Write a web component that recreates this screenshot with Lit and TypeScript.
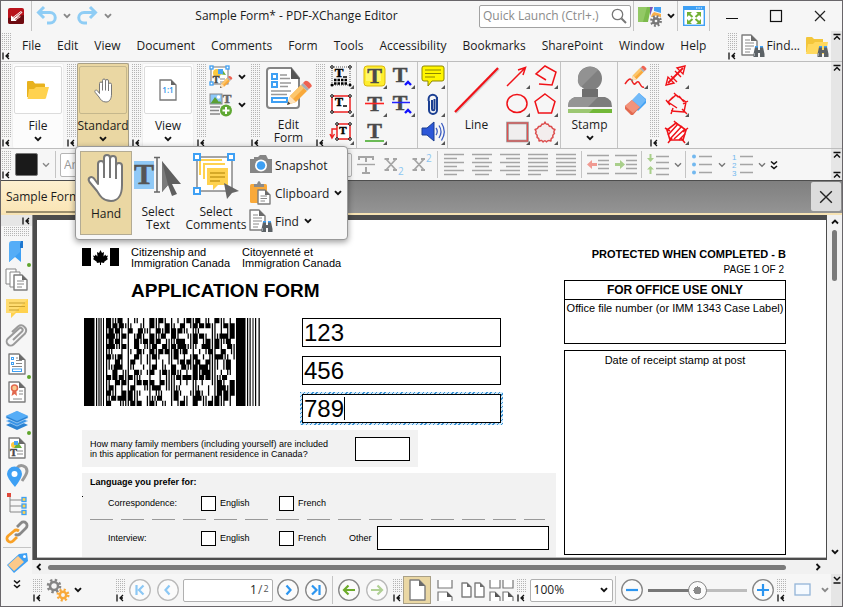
import { LitElement, html, svg, css, nothing } from "lit";
import type { TemplateResult, SVGTemplateResult } from "lit";
import { customElement, state } from "lit/decorators.js";
import { classMap } from "lit/directives/class-map.js";

/* ---------- icon helpers ---------- */
const ico = (w: number, h: number, body: SVGTemplateResult) =>
  html`<svg width=${w} height=${h} viewBox="0 0 ${w} ${h}" aria-hidden="true">${body}</svg>`;

const chevron = (color = "#111", strong = true) =>
  ico(8, 6, svg`<path d="M1 1.2 4 4.2 7 1.2" fill="none" stroke=${color} stroke-width=${strong ? 1.9 : 1.4} />`);

const foldMark = () =>
  ico(8, 8, svg`<path d="M1 0.5V7.5M7 1 4 4 7 7M4 4H7" fill="none" stroke="#111" stroke-width="1.3" />`);

const collapseUp = () =>
  ico(8, 8, svg`<path d="M0.500 1.500H7.500M1 6.500 4 3.500 7 6.500" fill="none" stroke="#111" stroke-width="1.500" />`);

const serifT = (x: number, y: number, size: number, color = "#4a4a4a") =>
  svg`<text x=${x} y=${y} font-family="Liberation Serif, serif" font-weight="700" font-size=${Math.round(size * 1.2)} text-anchor="middle" fill=${color} stroke=${color} stroke-width=".5">T</text>`;

const corner = svg`<path d="M24 20V24H20Z" fill="#555" />`;
const docShape = (x: number, y: number, w: number, h: number, f = 6) => svg`
  <path d="M${x} ${y}H${x + w - f}L${x + w} ${y + f}V${y + h}H${x}Z" fill="#fff" stroke="#7d7d7d" stroke-width="1.400" stroke-linejoin="round" />
  <path d="M${x + w - f} ${y}V${y + f}H${x + w}Z" fill="#6b6b6b" />`;
const pencil = (x: number, y: number, s: number) => svg`
  <g transform="translate(${x} ${y}) scale(${s})">
    <path d="M0 12 1.500 7.500 7 2 10 5 4.500 10.500Z" fill="#f9a93a" />
    <path d="M7 2 8.500 3.500 3 9 1.500 7.500Z" fill="#fcc66b" />
    <path d="M0 12 1.500 7.500 4.500 10.500Z" fill="#fde3bd" /><path d="M0 12 .6 10.300 1.700 11.400Z" fill="#444" />
    <path d="M7 2 8 1 11 4 10 5Z" fill="#a9b0b5" /><path d="M8 1 9 0Q10 -.5 11.500 1T12 3L11 4Z" fill="#ee6352" />
  </g>`;
const binoculars = (x: number, y: number) => svg`
  <g transform="translate(${x} ${y})">
    <path d="M2 1H5V4H7V1H10L11.500 8V11H7V7H5V11H.5V8Z" fill="#5c6266" />
    <path d="M2 0H5V1.500H2ZM7 0H10V1.500H7Z" fill="#3ea0f4" /><path d="M1.500 7V10" stroke="#9aa0a4" />
  </g>`;
const gear = (cx: number, cy: number, r: number, color: string) => svg`
  <circle cx=${cx} cy=${cy} r=${r} fill="none" stroke=${color} stroke-width="2.500" />
  <circle cx=${cx} cy=${cy} r=${r + 2} fill="none" stroke=${color} stroke-width="2.600" stroke-dasharray="${(r + 2) * 0.393} ${(r + 2) * 0.393}" />`;

const handPath = "M11 31V11a3 3 0 0 1 6 0V5a3 3 0 0 1 6 0V6a3 3 0 0 1 6 0V13a3 3 0 0 1 6 0V32C35 42 31 48 24 48C16 48 13 43 10 38L2.500 29C0 25 4 22.500 7 25.500Z M17 11V25M23 6V25M29 13V26";
const hand = (w: number, h: number) =>
  html`<svg width=${w} height=${h} viewBox="0 0 38 50" aria-hidden="true"><path d=${handPath} fill="#fff" stroke="#777" stroke-width="2" stroke-linejoin="round" /></svg>`;

const findDoc = () => ico(24, 24, svg`${docShape(1, 1, 15, 20, 6)}<path d="M4 6H9M4 9H13M4 12H13M4 15H10M4 18H9" stroke="#888" />${binoculars(12, 12)}`);

/* ---------- ribbon icons ---------- */
const I = {
  app: () => ico(16, 16, svg`<rect width="16" height="16" rx="2" fill="#b9121b" /><path d="M0 10 16 7V14a2 2 0 0 1-2 2H2a2 2 0 0 1-2-2Z" fill="#6d0a10" /><path d="M3 13V7.500L5 9 13 3 14.500 4.500 9 9 12 7.500 12.500 9 8 12 8.500 13Z" fill="#fff" /><path d="M5.500 10 13.500 4M7 11.500 12 8.300" stroke="#a11" stroke-width=".7" />`),
  undo: () => ico(22, 20, svg`<path d="M2.500 6.500H14a5 5 0 0 1 0 10.500H11" fill="none" stroke="#8fcdf5" stroke-width="3" /><path d="M8 1 2.500 6.500 8 12" fill="none" stroke="#8fcdf5" stroke-width="3" />`),
  redo: () => ico(22, 20, svg`<path d="M18.500 6.500H7a5 5 0 0 0 0 10.500H10" fill="none" stroke="#8fcdf5" stroke-width="3" /><path d="M13 1 18.500 6.500 13 12" fill="none" stroke="#8fcdf5" stroke-width="3" />`),
  search: () => ico(16, 16, svg`<circle cx="6.500" cy="6.500" r="5.200" fill="none" stroke="#777" stroke-width="1.300" /><path d="M10.500 10.500 15 15" stroke="#777" stroke-width="2" />`),
  theme: () => ico(24, 22, svg`<path d="M0 2H13L10 17H0Z" fill="#7cba4c" /><path d="M0 2H9L5 17H0Z" fill="#93c965" /><path d="M12 2H15L12 11Z" fill="#7a52b5" /><path d="M16 2H23V8L16 6Z" fill="#45a2f3" /><path d="M14 9 16 7 23 9V12H13Z" fill="#f9b04a" /><circle cx="18" cy="16" r="5.500" fill="#f6f6f6" />${gear(18, 16, 2.6, "#777")}`),
  full: () => ico(22, 20, svg`<rect x=".7" y=".7" width="20.600" height="18.600" fill="#fff" stroke="#3ea0f4" stroke-width="1.400" /><path d="M0 0H22V4H0Z" fill="#3ea0f4" /><path d="M13 2H19" stroke="#fff" stroke-dasharray="1.400 1" /><path d="M4 6H9L4 11ZM18 6V11L13 6ZM4 18V13L9 18ZM18 18H13L18 13Z" fill="#72b033" /><path d="M5 7 9.500 11M17 7 12.500 11M5 17 9.500 13M17 17 12.500 13" stroke="#72b033" stroke-width="2" />`),
  min: () => ico(12, 12, svg`<path d="M0 8.500H12" stroke="#111" />`),
  max: () => ico(12, 12, svg`<rect x=".5" y=".5" width="11" height="11" fill="none" stroke="#111" stroke-width="1.200" />`),
  close: (s = 12) => html`<svg width=${s} height=${s} viewBox="0 0 12 12" aria-hidden="true"><path d="M1 1 11 11M11 1 1 11" stroke="#222" stroke-width="1.200" /></svg>`,
  folder: () => ico(24, 20, svg`<path d="M1 2Q1 1 2 1H7L9 3.500H18Q19 3.500 19 4.500V17H1Z" fill="#e8b21e" /><path d="M3 9H8L10 7H23L20 18Q19.800 19 18.500 19H1.500Z" fill="#ffd24f" />`),
  folderFind: () => ico(24, 24, svg`<path d="M1 4Q1 3 2 3H7L9 5H18V18H1Z" fill="#f3c63b" /><path d="M3 10H8L10 8H23L21 20H1Z" fill="#ffd95e" />${binoculars(12, 12)}`),
  one: () => ico(18, 22, svg`<path d="M1 1H12L17 6V21H1Z" fill="#fff" stroke="#777" stroke-width="1.300" /><path d="M12 1V6H17Z" fill="#666" /><text x="9" y="14" text-anchor="middle" font-size="8" font-family="Open Sans, sans-serif" font-weight="600" fill="#2c8fe8">1:1</text>`),
  editContent: () => ico(24, 24, svg`<rect x="2" y="2" width="17" height="17" fill="#fff" stroke="#777" /><circle cx="8" cy="8" r="4" fill="#fcc93e" /><path d="M9 9 13 4 17 10Z" fill="#68ae3c" /><rect x="9" y="4" width="5" height="5" fill="#49a5f5" />${serifT(7, 18, 8)}<path d="M11 14H16M11 17H15" stroke="#888" />
    <g fill="#fff" stroke="#3ea0f4" stroke-width="1.300"><rect x="1" y="1" width="3" height="3" /><rect x="17" y="1" width="3" height="3" /><rect x="1" y="17" width="3" height="3" /></g>${pencil(11, 11, 1)}`),
  addImage: () => ico(24, 24, svg`<rect x="1" y="1" width="12" height="10" fill="#8cc8fa" stroke="#888" /><circle cx="9.500" cy="4" r="1.800" fill="#fff" /><path d="M1.500 10.500 6 4 10 9 11 8 12.500 10.500Z" fill="#5b9f33" />${serifT(18, 10, 11, "#666")}<path d="M1 14H11M1 17.500H10M1 21H11" stroke="#888" stroke-width="1.300" /><circle cx="17" cy="17.500" r="6" fill="#5fa833" /><path d="M13.500 17.500H20.500M17 14V21" stroke="#fff" stroke-width="2" />`),
  editForm: () => ico(48, 48, svg`<path d="M5 2H26L34 12V39Q34 42 31 42H5Q2 42 2 39V5Q2 2 5 2Z" fill="#fff" stroke="#858585" stroke-width="2" /><path d="M26 1.500V13H35Z" fill="#555" />
    <g fill="#fff" stroke="#3ea0f4" stroke-width="2"><rect x="7" y="8" width="5" height="5" /><rect x="7" y="16" width="5" height="5" /><rect x="7" y="32" width="15" height="4" /></g><path d="M15 9H22M15 12.500H25M15 17H26M15 20.500H23M6 25H26M6 28.500H22" stroke="#999" stroke-width="1.500" />${pencil(22, 15, 2)}`),
  typewriter: () => ico(24, 24, svg`<rect x="2" y="2" width="18" height="18" fill="none" stroke="#555" stroke-dasharray="1 1" />${serifT(9, 12, 11, "#000")}<path d="M13 12H17" stroke="#000" stroke-width="1.500" /><g fill="#fff" stroke="#000"><circle cx="2" cy="2" r="1.300" /><circle cx="20" cy="2" r="1.300" /></g><g fill="none" stroke="#000"><path d="M4 15H18M4 18.500H18" stroke-dasharray="2.500 1" stroke-width="2.400" /></g><g fill="#000"><circle cx="2" cy="20" r="1.500" /><circle cx="20" cy="20" r="1.500" /></g>${corner}`),
  textBox: () => ico(24, 24, svg`<rect x="2" y="3" width="18" height="16" fill="#fff" stroke="#e22" stroke-width="1.500" />${serifT(9, 13, 10, "#000")}<path d="M13 13H17" stroke="#000" stroke-width="1.500" /><g fill="#fff" stroke="#000"><circle cx="2" cy="3" r="1.300" /><circle cx="20" cy="3" r="1.300" /><circle cx="2" cy="19" r="1.300" /><circle cx="20" cy="19" r="1.300" /></g>${corner}`),
  callout: () => ico(24, 24, svg`<rect x="7" y="3" width="13" height="15" fill="#fff" stroke="#e22" stroke-width="1.500" /><path d="M7 8H2V17M0 13 2 17 4.500 13" fill="none" stroke="#e22" stroke-width="1.400" />${serifT(13, 13, 9, "#000")}<g fill="#fff" stroke="#000"><circle cx="7" cy="3" r="1.300" /><circle cx="20" cy="3" r="1.300" /><circle cx="7" cy="18" r="1.300" /><circle cx="20" cy="18" r="1.300" /></g>${corner}`),
  highlight: () => ico(24, 24, svg`<rect x="1" y="1" width="21" height="20" rx="3" fill="#ffee2e" stroke="#d9b70d" /><rect x="3" y="3" width="15" height="13" fill="#fff76a" />${serifT(11.5, 18, 18)}${corner}`),
  strike: () => ico(24, 24, svg`${serifT(11.5, 18, 18)}<path d="M2 10.500H21" stroke="#f22" stroke-width="1.600" />${corner}`),
  under: () => ico(24, 24, svg`${serifT(11.5, 17, 18)}<path d="M2 20H21" stroke="#5cb544" stroke-width="1.800" />${corner}`),
  insert: () => ico(24, 24, svg`${serifT(9, 17, 18)}<path d="M14 20 17 17 20 20" fill="none" stroke="#11f" stroke-width="2.400" />${corner}`),
  replace: () => ico(24, 24, svg`${serifT(9, 17, 18)}<path d="M1 9.500H19" stroke="#22f" stroke-width="1.500" /><path d="M14 20 17 17 20 20" fill="none" stroke="#11f" stroke-width="2.400" />${corner}`),
  note: () => ico(24, 24, svg`<path d="M3 1H21Q23 1 23 3V14Q23 16 21 16H11L7 21V16H3Q1 16 1 14V3Q1 1 3 1Z" fill="#fff500" stroke="#8d8600" /><path d="M4 5H20M4 8.500H20M4 12H14" stroke="#8d8600" stroke-width="1.200" />${corner}`),
  attach: () => ico(24, 24, svg`<path d="M8 8V17a4 4 0 0 0 8 0V6a4.200 4.200 0 0 0-8.400 0V8M16 9V4M11 7V16a1 1 0 0 0 2.500 0V6" fill="none" stroke="#1b3f92" stroke-width="2" />${corner}`),
  sound: () => ico(24, 24, svg`<path d="M1 7H6L13 1V20L6 14H1Z" fill="#2c57d8" stroke="#1b3f92" /><path d="M15 7Q17.500 10.500 15 14M18 4.500Q22 10.500 18 17M20.500 2Q26 10.500 20.500 19.500" fill="none" stroke="#3a5bc0" stroke-width="1.300" />${corner}`),
  line: () => ico(48, 48, svg`<path d="M2 46 45 2" stroke="#9b9b9b" stroke-opacity=".4" stroke-width="2" transform="translate(1 1)" /><path d="M2 46 45 2" stroke="#f01218" stroke-width="2.200" />`),
  arrow: () => ico(24, 24, svg`<path d="M1 21 19 3M12 5 19.500 2.500 17 10" fill="none" stroke="#f01218" stroke-width="1.500" />${corner}`),
  ellipse: () => ico(24, 24, svg`<ellipse cx="11" cy="10.500" rx="10" ry="9" fill="none" stroke="#f01218" stroke-width="1.500" />${corner}`),
  rect: () => ico(24, 24, svg`<rect x="1.500" y="2" width="20" height="18" fill="#f0eeee" stroke="#9a9a9a" stroke-width="2.600" /><rect x="1.500" y="2" width="20" height="18" fill="none" stroke="#e05050" stroke-width="1.200" />${corner}`),
  polyline: () => ico(24, 24, svg`<path d="M12 15 2 9 11 1 22 7 18 20 5 19" fill="none" stroke="#f01218" stroke-width="1.500" />${corner}`),
  polygon: () => ico(24, 24, svg`<path d="M11 1 21 8.500 17.500 20H4.500L1 8.500Z" fill="none" stroke="#f01218" stroke-width="1.500" />${corner}`),
  cloud: () => ico(24, 24, svg`<path d="M11 1Q12 4 14 3Q15 6 17.500 5.500Q18 8 21 8.500Q19 11 20.500 12.500Q18 14 19 16.500Q16.500 17 17 20Q14 18.500 12.500 21Q11 18.500 9 21Q8 18.500 5 20Q5.500 17 3 16.500Q4 14 1.500 12.500Q3 10.500 1 8.500Q4 8 4.500 5.500Q7 6 8 3Q10 4 11 1Z" fill="#f3eded" stroke="#dc4d4d" stroke-width="1.400" stroke-linejoin="round" />${corner}`),
  stamp: () => ico(46, 48, svg`<circle cx="23" cy="12.500" r="12" fill="#808080" /><path d="M14 21Q10 18 11 12.500A12 12 0 0 1 31 4Z" fill="#929292" /><path d="M15 23H31V31H15Z" fill="#6e6e6e" /><path d="M8 31H38Q45 33 45 41H1Q1 33 8 31Z" fill="#7d7d7d" /><path d="M8 31H31L21 41H1Q1 33 8 31Z" fill="#949494" /><path d="M1 43H45V47H1Z" fill="#72b838" /><path d="M1 43H26L22 47H1Z" fill="#9cc772" />`),
  scribble: () => ico(24, 24, svg`<path d="M1 19Q6 11 8 16T12 18T16 19T20 22" fill="none" stroke="#e22" stroke-width="1.500" />${pencil(7, 1, 1.25)}${corner}`),
  eraser: () => ico(24, 24, svg`<path d="M15 0 22 6V10L14 18 6 10Z" fill="#45a2f3" /><path d="M1 13 8 7 16 14 9 22H7L1 16Z" fill="#e2694f" /><path d="M1 13 8 7 16 14 9 20Z" fill="#f2937b" /><path d="M8 7 15 0 22 7 16 14Z" fill="#72baf8" />`),
  distance: () => ico(24, 24, svg`<path d="M3 18 18 3" stroke="#f01218" stroke-width="1.800" /><path d="M1 20 3 12 9 18ZM20 1 12 3 18 9ZM6 11 12 17M10 6 16 12" fill="none" stroke="#f01218" stroke-width="1.400" />${corner}`),
  perimeter: () => ico(24, 24, svg`<path d="M12 15 3 9 11 2 21 9 19 19 6 18M1 7 5 12M9 0 13 4M18 11 23 8M17 16 22 21M8 15 6 21M4 8 8 4M14 3 19 9" fill="none" stroke="#f01218" stroke-width="1.400" />${corner}`),
  area: () => ico(24, 24, svg`<path d="M11 2 21 9 18 19H5L2 9Z" fill="#fff" stroke="#f01218" stroke-width="1.600" /><path d="M3 14 13 3M5 18 17 5M9 18 20 8M14 19 20 13M0 7 5 10M9 0 13 4M18 11 23 7M16 17 20 22M7 17 3 22" stroke="#f01218" stroke-width="1.500" />${corner}`),
};

/* ---------- popup icons ---------- */
const P = {
  selectText: () => ico(48, 48, svg`<rect x="0" y="8" width="20" height="28" fill="#90c9f6" />${serifT(10, 31, 25, "#555")}<path d="M20 4.500H26M23 4.500V39M20 39H26" stroke="#666" stroke-width="1.500" fill="none" /><path d="M28 8V39L34 32 38 43 43 41 38 31H47Z" fill="#5f5f5f" /><path d="M28 8V39L34 32Z" fill="#7b7b7b" />`),
  selectComments: () => ico(48, 48, svg`<rect x="5" y="4" width="35" height="34" fill="#fff" stroke="#888" stroke-width="1.500" /><path d="M7 6H30V8H9V22H7ZM11 10H33V12H13V26H11Z" fill="#ffd24f" /><path d="M15 15H36V32H26L21 37V32H15Z" fill="#ffd24f" /><path d="M18 20H33M18 24H33M18 28H28" stroke="#c99c1c" stroke-width="1.400" />
    <g fill="#fff" stroke="#3ea0f4" stroke-width="2"><rect x="2" y="1" width="6" height="6" /><rect x="36" y="1" width="6" height="6" /><rect x="2" y="35" width="6" height="6" /></g><path d="M32 30 47 38 40 40 35 46Z" fill="#666" />`),
  snapshot: () => ico(24, 20, svg`<path d="M1 4H5V2H9L11 0H17L19 4H23V18H1Z" fill="#868686" /><circle cx="12" cy="10.500" r="6" fill="#fff" /><circle cx="12" cy="10.500" r="4.300" fill="#3ea0f4" />`),
  clipboard: () => ico(24, 24, svg`<rect x="1" y="3" width="17" height="19" rx="1.500" fill="#f9a93a" /><path d="M5 6V3H8Q9 0 10 0T12 3H15V6Z" fill="#8b8b8b" />${docShape(9, 9, 12, 14, 5)}<path d="M11.500 15H18M11.500 17.500H18M11.500 20H16" stroke="#888" />`),
};

/* ---------- formatting bar icons ---------- */
const lines = (rows: number[][]) =>
  ico(22, 24, svg`${rows.map(([a, b], i) => svg`<path d="M${a} ${1.5 + i * 4}H${b}" stroke="#a5a5a5" stroke-width="1.500" />`)}`);
const F = {
  strike: () => ico(22, 24, svg`<path d="M4 7V4H18V7M11 4V9M11 14V20M7 20H15" fill="none" stroke="#a5a5a5" stroke-width="2" /><path d="M2 11.500H20" stroke="#a5a5a5" stroke-width="1.400" />`),
  sub: () => ico(22, 24, svg`<path d="M3 6 13 17M13 6 3 17M1.500 6H6M10 6H14M1.500 17H6M10 17H14" stroke="#a5a5a5" stroke-width="1.800" /><text x="15" y="22" font-family="Open Sans, sans-serif" font-size="10" fill="#8cc6f2">2</text>`),
  sup: () => ico(22, 24, svg`<path d="M3 6 13 17M13 6 3 17M1.500 6H6M10 6H14M1.500 17H6M10 17H14" stroke="#a5a5a5" stroke-width="1.800" /><text x="15" y="9" font-family="Open Sans, sans-serif" font-size="10" fill="#8cc6f2">2</text>`),
  left: () => lines([[1, 21], [1, 14], [1, 21], [1, 14], [1, 21], [1, 14]]),
  center: () => lines([[1, 21], [4, 18], [1, 21], [4, 18], [1, 21], [4, 18]]),
  right: () => lines([[1, 21], [7, 21], [1, 21], [7, 21], [1, 21], [7, 21]]),
  justify: () => lines([[1, 21], [1, 21], [1, 21], [1, 21], [1, 21], [1, 14]]),
  full: () => lines([[1, 21], [1, 21], [1, 21], [1, 21], [1, 21], [1, 21]]),
  outdent: () => ico(24, 24, svg`<path d="M1 2.500H23M12 7.500H23M12 11.500H23M12 15.500H23M1 20.500H23" stroke="#a5a5a5" stroke-width="1.500" /><path d="M1 11.500 6 7V10H11V13H6V16Z" fill="#f09a92" />`),
  indent: () => ico(24, 24, svg`<path d="M1 2.500H23M12 7.500H23M12 11.500H23M12 15.500H23M1 20.500H23" stroke="#a5a5a5" stroke-width="1.500" /><path d="M11 11.500 6 7V10H1V13H6V16Z" fill="#a9cf8b" />`),
  spacing: () => ico(22, 24, svg`<path d="M9 3.500H22M9 9.500H22M9 15.500H22M9 21.500H22" stroke="#a5a5a5" stroke-width="1.400" /><path d="M3.500 1V7M3.500 21V14" stroke="#a9cf8b" stroke-width="2" /><path d="M0 5H7L3.500 9ZM0 16.500H7L3.500 13Z" fill="#a9cf8b" />`),
  bullets: () => ico(22, 24, svg`<path d="M8 3.500H21M8 11.500H21M8 19.500H21" stroke="#a5a5a5" stroke-width="1.400" /><g fill="#72b8ef"><circle cx="3" cy="3.500" r="2" /><circle cx="3" cy="11.500" r="2" /><circle cx="3" cy="19.500" r="2" /></g>`),
  numbers: () => ico(22, 24, svg`<path d="M9 3.500H22M9 11.500H22M9 19.500H22" stroke="#a5a5a5" stroke-width="1.400" /><g fill="#72b8ef" font-family="Liberation Sans, sans-serif" font-size="8"><text x="1" y="7">1</text><text x="1" y="15">2</text><text x="1" y="23">3</text></g>`),
  more: () => ico(8, 10, svg`<path d="M1 1.500 4 4 7 1.500M1 6 4 8.500 7 6" fill="none" stroke="#111" stroke-width="1.600" />`),
};

/* ---------- side pane icons ---------- */
const S: { name: string; dot?: boolean; body: SVGTemplateResult }[] = [
  { name: "Bookmarks", dot: true, body: svg`<path d="M4 4H16V22L10 17 4 22Z" fill="#3ea0f4" /><path d="M15 1H18V8H15Z" fill="#1f78d0" /><path d="M4 4Q4 1 7 1H16L15 4V12L4 22Z" fill="#55adf7" />` },
  { name: "Thumbnails", body: svg`<path d="M5 16H1V1H11V4M9 19H5V4H15V7" fill="#fff" stroke="#858585" />${docShape(9, 7, 13, 15, 5)}<path d="M12 13H19M12 16H19M12 19H17" stroke="#888" />` },
  { name: "Comments", body: svg`<path d="M1 3H23V17H11L6 22V17H1Z" fill="#ffd24f" /><path d="M1 3H23L9 17H1Z" fill="#ffdc70" /><path d="M4 7H20M4 10.500H20M4 14H14" stroke="#c9a233" />` },
  { name: "Attachments", body: svg`<path d="M8 16 17 7.500a2 2 0 0 0-3-3L3 14.500a4 4 0 0 0 5.500 6L20 9.500a5 5 0 0 0-7-7L7 8" fill="none" stroke="#9a9a9a" stroke-width="2" />` },
  { name: "Fields", dot: true, body: svg`${docShape(4, 2, 16, 20, 6)}<g fill="none" stroke="#3ea0f4"><rect x="6.500" y="5.500" width="2" height="2" /><rect x="6.500" y="10.500" width="2" height="2" /><rect x="7.500" y="17" width="9" height="2.500" /></g><path d="M11 6H13M11 8.500H17M11 11.500H17M7 14.500H17" stroke="#888" />` },
  { name: "Signatures", body: svg`${docShape(4, 2, 16, 20, 6)}<path d="M8 9 6.500 16 9.500 14 12 16 11 9Z" fill="#e2694f" /><circle cx="9.500" cy="8" r="3" fill="#f9c98f" stroke="#e2694f" stroke-width="1.500" /><path d="M14 11H18M14 14H18M8 19H17" stroke="#888" />` },
  { name: "Layers", dot: true, body: svg`<path d="M1 17 12 12 23 17 12 22Z" fill="#2c83d3" /><path d="M1 13 12 8 23 13 12 18Z" fill="#3a94e6" stroke="#c9e4fb" stroke-width=".6" /><path d="M1 8 12 3 23 8V10L12 15 1 10Z" fill="#2c83d3" stroke="#c9e4fb" stroke-width=".6" /><path d="M1 8 12 3 23 8 12 13Z" fill="#55adf7" />` },
  { name: "Content", body: svg`${docShape(4, 2, 16, 20, 6)}<circle cx="9" cy="9" r="3" fill="#fcc93e" /><path d="M9 12 13 6 17 12Z" fill="#68ae3c" /><rect x="9" y="5" width="4" height="4" fill="#49a5f5" />${serifT(8.5, 20, 8)}<path d="M12 15H18M12 18H18" stroke="#888" />` },
  { name: "Destinations", body: svg`<path d="M17 17Q22 10 22 7a5.500 5.500 0 0 0-10-3" fill="none" stroke="#999" stroke-width="3" /><path d="M10 23Q2 14 2 10a7.500 7.500 0 0 1 15 0Q17 14 10 23Z" fill="#3ea0f4" /><circle cx="9.500" cy="10" r="3" fill="#fff" />` },
  { name: "Structure", body: svg`<path d="M5 4V20H18M5 8H18M5 14H18" fill="none" stroke="#888" /><rect x="2" y="1" width="4" height="4" fill="#e0483a" /><g fill="#ffd24f" stroke="#3ea0f4" stroke-width="1.300"><rect x="17" y="5.500" width="4" height="4" /><rect x="17" y="12" width="4" height="4" /><rect x="17" y="18.500" width="4" height="4" /></g>` },
  { name: "Links", body: svg`<path d="M12 7 16 3a3.500 3.500 0 0 1 5 5L15 14Q12 16 10 14" fill="none" stroke="#888" stroke-width="2.800" /><path d="M14 11Q11 9 9 11L3 16a3.500 3.500 0 0 0 5 5L12 17" fill="none" stroke="#f9a126" stroke-width="2.800" />` },
];
const tagIcon = () => ico(24, 24, svg`<path d="M14 3 22 2 23 10 9 22 2 14Z" fill="#3ea0f4" /><path d="M3 14 13 5 19 11 9 20Z" fill="#fcc98a" /><circle cx="19.500" cy="5.500" r="1.500" fill="#fff" />`);

/* ---------- stacked 2-D barcode of the form ---------- */
const barcode = () => {
  const parts: string[] = [];
  const bar = (x: number, w: number, y = 0, h = 88) => parts.push(`M${x} ${y}h${w}v${h}h${-w}Z`);
  [[0, 10.5], [12, 1.2], [14.4, 1.2], [16.5, 1.2], [19, 1]].forEach(([x, w]) => bar(x, w));
  [[152, 9.5], [163, 1.2], [165.5, 1.2], [168.5, 1], [171, 1.2], [174.5, 1.3]].forEach(([x, w]) => bar(x, w));
  let seed = 7153;
  const rnd = () => (seed = (seed * 16807) % 2147483647) / 2147483647;
  const rows = 17, unit = 130 / (6 * 17), rh = 88 / rows;
  for (let r = 0; r < rows; r++)
    for (let c = 0; c < 6; c++) {
      const seg = [1, 1, 1, 1, 1, 1, 1, 1];
      for (let k = 0; k < 3; k++) seg[Math.floor(rnd() * 8)] += 3;
      let x = 22 + c * 17 * unit;
      seg.forEach((n, i) => {
        if (i % 2 === 0) bar(+x.toFixed(2), +(n * unit).toFixed(2), +(r * rh).toFixed(2), +rh.toFixed(2));
        x += n * unit;
      });
    }
  return ico(176, 88, svg`<path d=${parts.join("")} fill="#000" />`);
};

const pageIcons = {
  single: () => ico(24, 24, svg`${docShape(5, 2, 15, 20, 6)}`),
  continuous: () => ico(24, 24, svg`<path d="M5 2V10H19V2M5 23V14H14L19 19V23" fill="#fff" stroke="#777" stroke-width="1.200" /><path d="M14 14V19H19Z" fill="#555" />`),
  two: () => ico(26, 24, svg`${docShape(2, 5, 9, 14, 4)}${docShape(15, 5, 9, 14, 4)}`),
  twoCont: () => ico(26, 24, svg`<path d="M2 2V10H12V2M15 2V10H25V2M2 23V14H7L12 19V23M15 23V14H20L25 19V23" fill="#fff" stroke="#777" stroke-width="1.200" /><path d="M7 14V19H12ZM20 14V19H25Z" fill="#555" />`),
};
const nav = (d: string, color: string) =>
  ico(22, 22, svg`<circle cx="11" cy="11" r="10.300" fill="#fbfbfb" stroke=${color.startsWith("#2") || color.startsWith("#6") ? "#868686" : "#b9b9b9"} stroke-width="1.300" /><path d=${d} fill="none" stroke=${color} stroke-width="2.200" />`);

@customElement("app-root")
export class AppRoot extends LitElement {
  @state() private fields = ["123", "456", "789"];

  static styles = css`
    :host { display: block; height: 100vh; min-height: 560px; overflow: hidden; font: 12px/16px "Open Sans", "Noto Sans", sans-serif; color: #1b1b1b; }
    * { box-sizing: border-box; }
    svg { display: block; flex: none; overflow: visible; }
    button { font: inherit; color: inherit; background: none; border: 0; padding: 0; margin: 0; display: flex; align-items: center; justify-content: center; flex: none; }
    input, select { font: inherit; color: inherit; margin: 0; border-radius: 0; outline: 0; min-width: 0; }
    .window { height: 100%; border: 1px solid #69666a; display: flex; flex-direction: column; background: #f6f6f6; }
    .row { display: flex; align-items: center; }
    .vline { width: 1px; align-self: stretch; background: #c4c4c4; flex: none; }

    .title { height: 30px; flex: none; }
    .app { width: 30px; }
    .undo { width: 28px; margin-left: 1px; }
    .chev { width: 12px; align-self: stretch; }
    .caption { flex: 1; text-align: center; white-space: nowrap; }
    .search { display: flex; align-items: center; width: 152px; height: 23px; border: 1px solid #a2a2a2; border-radius: 2px; background: #fff; padding: 0 3px; margin-right: 2px; }
    .search input { border: 0; background: none; padding: 0; flex: 1; }
    .search input::placeholder { color: #8b8b8b; opacity: 1; }
    .tool { width: 28px; height: 28px; }
    .title .tool { width: 31px; }
    .wbtn { width: 44px; height: 30px; }

    .grip { width: 10px; align-self: stretch; display: flex; flex-direction: column; flex: none; padding: 2px 0 1px; gap: 1px; align-items: flex-start; }
    .dots { flex: 1; width: 9px; background: conic-gradient(from 0deg at 1px 1px, transparent 75%, #b4b4b4 0) 0 0 / 2px 2px; }
    .rail { width: 11px; align-self: stretch; background: #e6e6e6; display: flex; flex-direction: column; align-items: center; justify-content: space-between; padding: 2px 0 1px; flex: none; }
    .spring { flex: 1; }

    .menu { height: 30px; flex: none; padding-left: 1px; }
    .menu nav { display: flex; flex: 1; gap: 16px; padding-left: 10px; }
    .menu a { color: inherit; text-decoration: none; white-space: nowrap; }
    .find { gap: 2px; margin-left: 3px; }

    .ribbon { height: 88px; flex: none; padding-left: 1px; border-top: 1px solid #bdbdbd; border-bottom: 1px solid #bdbdbd; align-items: stretch; position: relative; z-index: 2; }
    .anchor { position: relative; display: flex; }
    .card { width: 52px; margin: 1px 3px 0 0; flex-direction: column; justify-content: flex-start; padding: 2px 0; border: 1px solid #f0f0f0; border-bottom: 0; background: #fcfcfc; line-height: 16px; border-radius: 2px; }
    .card .pic { width: 48px; height: 48px; border: 1px solid #dcdcdc; border-radius: 2px; background: #fff; display: grid; place-items: center; margin-bottom: 4px; flex: none; }
    .card .cap { margin-bottom: 2px; white-space: nowrap; }
    .card.on { background: #ead7a3; border-color: #a9a087; }
    .card.on .pic { background: #ead7a3; border-color: #c5b78c; }
    .col { display: flex; flex-direction: column; padding-top: 1px; }
    .col button { width: 28px; height: 28px; }
    .col.slim button { width: 14px; }
    .pad { padding-left: 3px; }
    .big { width: 55px; flex-direction: column; justify-content: flex-start; padding-top: 4px; line-height: 13px; gap: 4px; }
    .ribbon .vline { margin: 0 1px 0 0; }

    .popup { position: absolute; left: -2px; top: 84px; z-index: 5; width: 273px; height: 94px; display: flex; padding: 4px; background: #f7f7f7; border: 1px solid #999; border-radius: 4px; box-shadow: 0 2px 6px #0006; line-height: 13px; }
    .pb { width: 52px; flex-direction: column; justify-content: flex-start; border: 1px solid transparent; padding-top: 1px; gap: 4px; }
    .pb.on { background: #ead7a3; border-color: #b3ab94; }
    .pb.wide { width: 64px; }
    .plist { display: flex; flex-direction: column; }
    .plist button { height: 28px; justify-content: flex-start; gap: 2px; padding-left: 1px; white-space: nowrap; }
    .plist svg + span + svg { margin-left: 3px; }

    .format { height: 31px; flex: none; padding-left: 1px; }
    .swatch { width: 23px; height: 23px; background: #1a1a1a; border: 1px solid #777; border-radius: 2px; margin-left: 3px; }
    .format .chev { width: 16px; }
    .format .list { width: 12px; }
    .format .tool { height: 28px; }
    .format .vline { margin: 2px 2px 2px 1px; }
    .fontbox { width: 292px; height: 24px; border: 1px solid #b5b5b5; border-radius: 2px; background: #fff; color: #999; margin: 0 0 0 2px; padding: 0 0 0 3px; appearance: none; }

    .tabs { height: 35px; flex: none; display: flex; align-items: stretch; justify-content: space-between; border-top: 1px solid #4d4d4d; border-bottom: 2px solid #f7e3b3; background: linear-gradient(#7f7f7f, #949494); }
    .tab { width: 106px; background: linear-gradient(#fdf0cf, #fae5b5); padding: 8px 5px 1px; justify-content: flex-start; }
    .tab span { border-bottom: 2px solid #9b8e6d; height: 24px; width: 100%; text-align: left; white-space: nowrap; }
    .tabclose { width: 30px; height: 29px; background: #dcdcdc; border-radius: 2px; margin: 1px 1px 0 0; }

    .main { flex: 1; min-height: 0; display: flex; }
    .side { width: 31px; flex: none; display: flex; flex-direction: column; align-items: center; }
    .sidetop { align-self: stretch; background: #e6e6e6; height: 11px; display: flex; justify-content: flex-end; align-items: center; padding-right: 2px; flex: none; }
    .sidegrip { width: 26px; height: 10px; flex: none; margin: 1px 0; background: conic-gradient(from 0deg at 1px 1px, transparent 75%, #b4b4b4 0) 0 0 / 2px 2px; }
    .side button { width: 30px; height: 28px; position: relative; }
    .side button.last { height: 14px; }
    .dot { position: absolute; right: 1px; bottom: -1px; width: 4px; height: 4px; border-radius: 2px; background: #5fa52c; }
    .hline { height: 1px; width: 28px; background: #c4c4c4; margin: 1px 0; flex: none; }
    .center { flex: 1; min-width: 0; display: flex; flex-direction: column; }
    .view { flex: 1; min-height: 0; display: flex; }
    .canvas { flex: 1; min-width: 0; background: #4c4c4c; padding: 5px 1px 2px 4px; border-left: 1px solid #888; overflow: hidden; }
    .vs { width: 15px; background: #f1f1f1; display: flex; flex-direction: column; align-items: center; padding: 4px 0 5px; gap: 5px; flex: none; }
    .vs .thumb { width: 5px; height: 51px; border-radius: 3px; background: #7a7a7a; }
    .hs { height: 14px; background: #f1f1f1; display: flex; align-items: center; gap: 5px; padding: 0 20px 0 3px; flex: none; }
    .hs .track { flex: 1; }
    .hs .thumb { width: 97%; height: 5px; border-radius: 3px; background: #7a7a7a; }

    .page { height: 100%; background: #fff; overflow: hidden; display: grid; grid-template-columns: 1fr 222px; grid-template-rows: minmax(0, 1fr); gap: 8px; padding: 0 40px 0 45px; color: #000; font: 11px/11px "Liberation Sans", Arial, sans-serif; border-bottom: 1px solid #bbb; }
    .brand { display: flex; gap: 12px; padding-top: 27px; white-space: nowrap; }
    .brand svg { margin-top: 1px; }
    h1 { font-size: 19px; line-height: 22px; margin: 11px 0 16px 49px; white-space: nowrap; }
    .codes { display: flex; gap: 42px; padding-left: 2px; height: 112px; }
    .stack { display: flex; flex-direction: column; gap: 9px; }
    .stack input { width: 199px; height: 29px; border: 1px solid #000; font-size: 24px; padding: 0 1px; background: #fff; flex: none; }
    .focus { position: relative; margin: -2px; padding: 2px; width: 203px; height: 33px; background: repeating-linear-gradient(135deg, #3b93d5 0 1px, #d5ecfc 1px 3px); display: flex; }
    .caret { position: absolute; left: 44px; top: 5px; width: 1px; height: 23px; background: #000; }
    .gray { background: #f2f2f2; font-size: 9px; line-height: 10px; }
    .family { width: 336px; height: 37px; padding: 0 8px; display: flex; align-items: center; justify-content: space-between; }
    .gray input[type="text"] { border: 1px solid #000; background: #fff; height: 24px; }
    .family input { width: 55px; }
    .lang { margin-top: 6px; height: 90px; padding: 4px 7px 0 8px; position: relative; }
    .lang::before { content: ""; position: absolute; left: 0; top: 23px; width: 1px; height: 1px; background: #000; }
    .lang h2 { font-size: 9px; line-height: 10px; margin: 0; }
    .pref { display: grid; grid-template-columns: 93px 78px 70px 28px 1fr; align-items: center; height: 24px; padding-left: 18px; }
    .pref label { display: flex; align-items: center; gap: 4px; }
    .pref.first { margin-top: 4px; }
    .pref input[type="checkbox"] { appearance: none; width: 15px; height: 15px; border: 1px solid #000; background: #fff; }
    .dash { height: 1px; margin: 4px 4px 6px 0; background: repeating-linear-gradient(90deg, #999 0 23px, transparent 23px 31px); }
    .office { padding-top: 28px; display: flex; flex-direction: column; white-space: nowrap; min-height: 0; padding-bottom: 2px; }
    .office .prot { font-weight: 700; align-self: flex-end; line-height: 12px; }
    .office .pg { font-size: 10px; line-height: 12px; align-self: flex-end; margin: 4px 2px 4px 0; }
    .use { border: 1px solid #000; height: 64px; text-align: center; flex: none; }
    .use h2 { margin: 0 0 3px; font-size: 12px; line-height: 18px; border-bottom: 1px solid #000; }
    .date { margin-top: 6px; flex: 1; border: 1px solid #000; text-align: center; padding-top: 4px; }

    .bottom { height: 32px; flex: none; padding-left: 1px; }
    .bottom .round { width: 28px; height: 28px; }
    .gears { width: 28px; height: 28px; margin-left: 1px; }
    .gap { width: 32px; flex: none; }
    .nudge { width: 2px; flex: none; }
    .pageno { width: 90px; height: 23px; border: 1px solid #b0b0b0; border-radius: 2px; background: #fff; display: flex; align-items: center; justify-content: flex-end; padding: 0 3px; margin: 0 1px; gap: 1px; }
    .pageno input { border: 0; width: 60px; text-align: right; padding: 0; background: none; }
    .pageno span { color: #555; }
    .pageno sup { font-size: 9px; line-height: 9px; align-self: flex-start; margin-top: 4px; color: #555; }
    .pv { width: 28px; height: 28px; }
    .pv.on { background: #ead7a3; border: 1px solid #a9a087; }
    .bottom .vline { margin: 2px 2px; }
    .bottom .tool { width: 32px; }
    .zoom { position: relative; display: flex; align-items: center; margin-left: 3px; }
    .zoom select { appearance: none; width: 83px; height: 23px; border: 1px solid #b0b0b0; border-radius: 2px; background: #fff; padding: 0 3px; }
    .zoom svg { position: absolute; right: 5px; }
    .slider { appearance: none; width: 100px; height: 20px; margin: 0 2px; background: linear-gradient(90deg, #777 50%, #bdbdbd 50%) center / 100% 3px no-repeat; }
    .slider::-webkit-slider-thumb { appearance: none; width: 19px; height: 19px; border-radius: 50%; border: 1px solid #868686; background: radial-gradient(circle, #8a8a8a 0 4px, #fbfbfb 4px); }
    .bottom .grip { padding: 5px 0 4px; }
  `;

  private grip() {
    return html`<div class="grip"><span class="dots"></span>${foldMark()}</div>`;
  }

  private btn(label: string, icon: TemplateResult, cls = "tool") {
    return html`<button class=${cls} aria-label=${label}>${icon}</button>`;
  }

  private card(label: string, icon: TemplateResult, on = false, extra: unknown = nothing) {
    return html`${this.grip()}<div class="anchor">
      <button class=${classMap({ card: true, on })}><span class="pic">${icon}</span><span class="cap">${label}</span>${chevron()}</button>${extra}</div>`;
  }

  private col(items: [string, () => TemplateResult][], cls = "") {
    return html`<div class="col ${cls}">${items.map(([n, i]) => this.btn(n, i(), ""))}</div>`;
  }

  private titleBar() {
    return html`<header class="row title">
      <button class="app" aria-label="PDF-XChange Editor">${I.app()}</button><span class="vline"></span>
      ${this.btn("Undo", I.undo(), "undo")}${this.btn("Undo history", chevron("#888"), "chev")}
      ${this.btn("Redo", I.redo(), "undo")}${this.btn("Redo history", chevron("#888"), "chev")}
      <span class="caption">Sample Form* - PDF-XChange Editor</span>
      <label class="search"><input type="text" placeholder="Quick Launch (Ctrl+.)" aria-label="Quick Launch" />${I.search()}</label>
      <span class="vline"></span>${this.btn("UI options", I.theme())}${this.btn("More UI options", chevron(), "chev")}
      <span class="vline"></span>${this.btn("Full screen", I.full())}<span class="vline"></span>
      ${this.btn("Minimize", I.min(), "wbtn")}${this.btn("Maximize", I.max(), "wbtn")}${this.btn("Close", I.close(), "wbtn")}
    </header>`;
  }

  private menuBar() {
    const items = ["File", "Edit", "View", "Document", "Comments", "Form", "Tools", "Accessibility", "Bookmarks", "SharePoint", "Window", "Help"];
    return html`<div class="row menu">${this.grip()}
      <nav>${items.map((m) => html`<a href="#">${m}</a>`)}</nav>
      ${this.grip()}<button class="find">${findDoc()}Find...</button>
      ${this.btn("Search in files", I.folderFind(), "tool find")}
      <div class="rail">${collapseUp()}</div></div>`;
  }

  private popup() {
    return html`<div class="popup">
      <button class="pb on">${hand(38, 50)}Hand</button>
      <button class="pb">${P.selectText()}<span>Select<br />Text</span></button>
      <button class="pb wide">${P.selectComments()}<span>Select<br />Comments</span></button>
      <div class="plist">
        <button>${P.snapshot()}<span>Snapshot</span></button>
        <button>${P.clipboard()}<span>Clipboard</span>${chevron()}</button>
        <button>${findDoc()}<span>Find</span>${chevron()}</button>
      </div></div>`;
  }

  private ribbon() {
    return html`<div class="row ribbon">
      ${this.card("File", I.folder())}
      ${this.card("Standard", hand(19, 25), true, this.popup())}
      ${this.card("View", I.one())}
      ${this.grip()}
      ${this.col([["Edit content", I.editContent], ["Add content", I.addImage]])}
      ${this.col([["Edit options", () => chevron()], ["Add options", () => chevron()]], "slim")}
      <span class="nudge"></span>
      ${this.grip()}
      <button class="big">${I.editForm()}<span>Edit<br />Form</span></button>
      ${this.grip()}
      <span class="nudge"></span>
      ${this.col([["Typewriter", I.typewriter], ["Text box", I.textBox], ["Callout", I.callout]])}
      <span class="vline"></span>
      <div class="pad">${this.col([["Highlight", I.highlight], ["Strikeout", I.strike], ["Underline", I.under]])}</div>
      ${this.col([["Insert text", I.insert], ["Replace text", I.replace]])}
      <span class="vline"></span>
      ${this.col([["Note", I.note], ["Attach file", I.attach], ["Sound", I.sound]])}
      <span class="vline"></span>
      <button class="big">${I.line()}<span>Line</span></button>
      ${this.col([["Arrow", I.arrow], ["Oval", I.ellipse], ["Rectangle", I.rect]])}
      ${this.col([["Polyline", I.polyline], ["Polygon", I.polygon], ["Cloud", I.cloud]])}
      <span class="vline"></span>
      <button class="big">${I.stamp()}<span>Stamp</span>${chevron()}</button>
      <span class="vline"></span>
      <div class="pad">${this.col([["Pencil", I.scribble], ["Eraser", I.eraser]])}</div>
      ${this.grip()}
      <div class="pad">${this.col([["Distance", I.distance], ["Perimeter", I.perimeter], ["Area", I.area]])}</div>
      <span class="spring"></span><div class="rail">${collapseUp()}</div></div>`;
  }

  private formatBar() {
    const sep = html`<span class="vline"></span>`;
    return html`<div class="row format">${this.grip()}
      ${this.btn("Fill colour", html``, "swatch")}${this.btn("More colours", chevron("#888", false), "chev")}${sep}
      <input class="fontbox" aria-label="Font" value="Arial" />
      ${this.btn("Strikethrough", F.strike())}${this.btn("Subscript", F.sub())}${this.btn("Superscript", F.sup())}${sep}
      ${this.btn("Align left", F.left())}${this.btn("Align centre", F.center())}${this.btn("Align right", F.right())}${this.btn("Justify", F.justify())}${this.btn("Justify all", F.full())}${sep}
      ${this.btn("Outdent", F.outdent())}${this.btn("Indent", F.indent())}${sep}
      ${this.btn("Line spacing", F.spacing())}${this.btn("Spacing options", chevron("#777", false), "chev list")}${sep}
      ${this.btn("Bullets", F.bullets())}${this.btn("Bullet options", chevron("#777", false), "chev list")}
      ${this.btn("Numbering", F.numbers())}${this.btn("Numbering options", chevron("#777", false), "chev list")}
      ${this.btn("More", F.more(), "chev list")}
      <span class="spring"></span><div class="rail">${collapseUp()}${collapseUp()}</div></div>`;
  }

  private sidePane() {
    return html`<aside class="side"><div class="sidetop">${foldMark()}</div><span class="sidegrip"></span>
      ${S.map((s) => html`<button aria-label=${s.name}>${ico(24, 24, s.body)}${s.dot ? html`<span class="dot"></span>` : nothing}</button>`)}
      <span class="hline"></span>${this.btn("Tags", tagIcon(), "")}${this.btn("More panes", F.more(), "last")}</aside>`;
  }

  private pref(label: string, other: boolean) {
    return html`<div class=${classMap({ pref: true, first: !other })}><span>${label}</span>
      <label><input type="checkbox" />English</label><label><input type="checkbox" />French</label>
      ${other ? html`<label for="other">Other</label><input id="other" type="text" />` : nothing}</div>`;
  }

  private edit(i: number, e: Event) {
    this.fields = this.fields.map((v, k) => (k === i ? (e.target as HTMLInputElement).value : v));
  }

  private document() {
    const field = (i: number) => html`<input type="text" aria-label="Field ${i + 1}" .value=${this.fields[i]} @input=${(e: Event) => this.edit(i, e)} />`;
    return html`<article class="page"><div>
        <div class="brand">${ico(37, 18, svg`<path d="M0 0H9V18H0ZM28 0H37V18H28Z" /><path d="M18.500 2 20 5 22 4 21.500 8.500 23.500 6.500 24 8 26 7.500 25 10 26 11 22 14 22.300 15 19 14.600V17H18V14.600L14.700 15 15 14 11 11 12 10 11 7.500 13 8 13.500 6.500 15.500 8.500 15 4 17 5Z" />`)}
          <span>Citizenship and<br />Immigration Canada</span><span>Citoyenneté et<br />Immigration Canada</span></div>
        <h1>APPLICATION FORM</h1>
        <div class="codes">${barcode()}<div class="stack">${field(0)}${field(1)}<div class="focus">${field(2)}<span class="caret"></span></div></div></div>
        <div class="gray family"><label for="family">How many family members (including yourself) are included<br />in this application for permanent residence in Canada?</label><input id="family" type="text" /></div>
        <section class="gray lang"><h2>Language you prefer for:</h2>${this.pref("Correspondence:", false)}<div class="dash"></div>${this.pref("Interview:", true)}</section>
      </div>
      <div class="office"><span class="prot">PROTECTED WHEN COMPLETED - B</span><span class="pg">PAGE 1 OF 2</span>
        <div class="use"><h2>FOR OFFICE USE ONLY</h2>Office file number (or IMM 1343 Case Label)</div>
        <div class="date">Date of receipt stamp at post</div></div></article>`;
  }

  private bottomBar() {
    const arrow = (d: string) => ico(8, 8, svg`<path d=${d} fill="none" stroke="#111" stroke-width="1.800" />`);
    return html`<div class="hs">${arrow("M5.5 1 2.500 4 5.500 7")}<div class="track"><div class="thumb"></div></div>${arrow("M2.500 1 5.500 4 2.500 7")}</div>
      <footer class="row bottom">${this.grip()}
        ${this.btn("Options", ico(24, 24, svg`${gear(8, 8, 4, "#858585")}${gear(17, 17, 3.2, "#f9a93a")}`), "gears")}${this.btn("More options", chevron(), "chev")}
        <span class="gap"></span>${this.grip()}
        ${this.btn("First page", nav("M7.500 6V16M14.500 6.500 10 11 14.500 15.500", "#8cc8f5"), "round")}
        ${this.btn("Previous page", nav("M12.500 6.500 8.500 11 12.500 15.500", "#8cc8f5"), "round")}
        <label class="pageno"><input type="text" value="1" aria-label="Page" /><span>/</span><sup>2</sup></label>
        ${this.btn("Next page", nav("M9.500 6.500 13.500 11 9.500 15.500", "#2b95f0"), "round")}
        ${this.btn("Last page", nav("M7 6.500 11.500 11 7 15.500M14.500 6V16", "#2b95f0"), "round")}
        <span class="vline"></span>
        ${this.btn("Previous view", nav("M17 11H6M10.500 6.500 6 11 10.500 15.500", "#6cab2b"), "round")}
        ${this.btn("Next view", nav("M5 11H16M11.500 6.500 16 11 11.500 15.500", "#b0d094"), "round")}
        <span class="nudge"></span>${this.grip()}
        ${this.btn("Single page", pageIcons.single(), "pv on")}${this.btn("Continuous", pageIcons.continuous(), "pv")}
        ${this.btn("Two pages", pageIcons.two(), "pv")}${this.btn("Two pages continuous", pageIcons.twoCont(), "pv")}
        <span class="nudge"></span>${this.grip()}
        <span class="zoom"><select aria-label="Zoom"><option>100%</option></select>${chevron()}</span>
        <span class="vline"></span>
        ${this.btn("Zoom out", nav("M5 11H17", "#2b95f0"), "round")}
        <input class="slider" type="range" aria-label="Zoom level" value="50" />
        ${this.btn("Zoom in", nav("M5 11H17M11 5V17", "#2b95f0"), "round")}
        ${this.grip()}
        ${this.btn("Window layout", ico(18, 14, svg`<rect x="1" y="1" width="15" height="11" fill="#f5faff" stroke="#93b4d8" stroke-width="1.300" />`))}
        ${this.btn("Layout options", chevron("#888"), "chev")}
        <span class="spring"></span><div class="rail">${ico(8, 8, svg`<path d="M1 1 4 4 7 1M.5 7H7.500" fill="none" stroke="#111" stroke-width="1.500" />`)}</div></footer>`;
  }

  render() {
    return html`<div class="window">
      ${this.titleBar()}${this.menuBar()}${this.ribbon()}${this.formatBar()}
      <div class="tabs"><button class="tab"><span>Sample Form*</span></button>${this.btn("Close tab", I.close(14), "tabclose")}</div>
      <div class="main">${this.sidePane()}
        <div class="center"><div class="view"><div class="canvas">${this.document()}</div>
          <div class="vs">${ico(8, 6, svg`<path d="M1 4.500 4 1.500 7 4.500" fill="none" stroke="#111" stroke-width="1.800" />`)}<div class="thumb"></div><span class="spring"></span>${chevron()}</div></div>
          ${this.bottomBar()}</div></div>
    </div>`;
  }
}
